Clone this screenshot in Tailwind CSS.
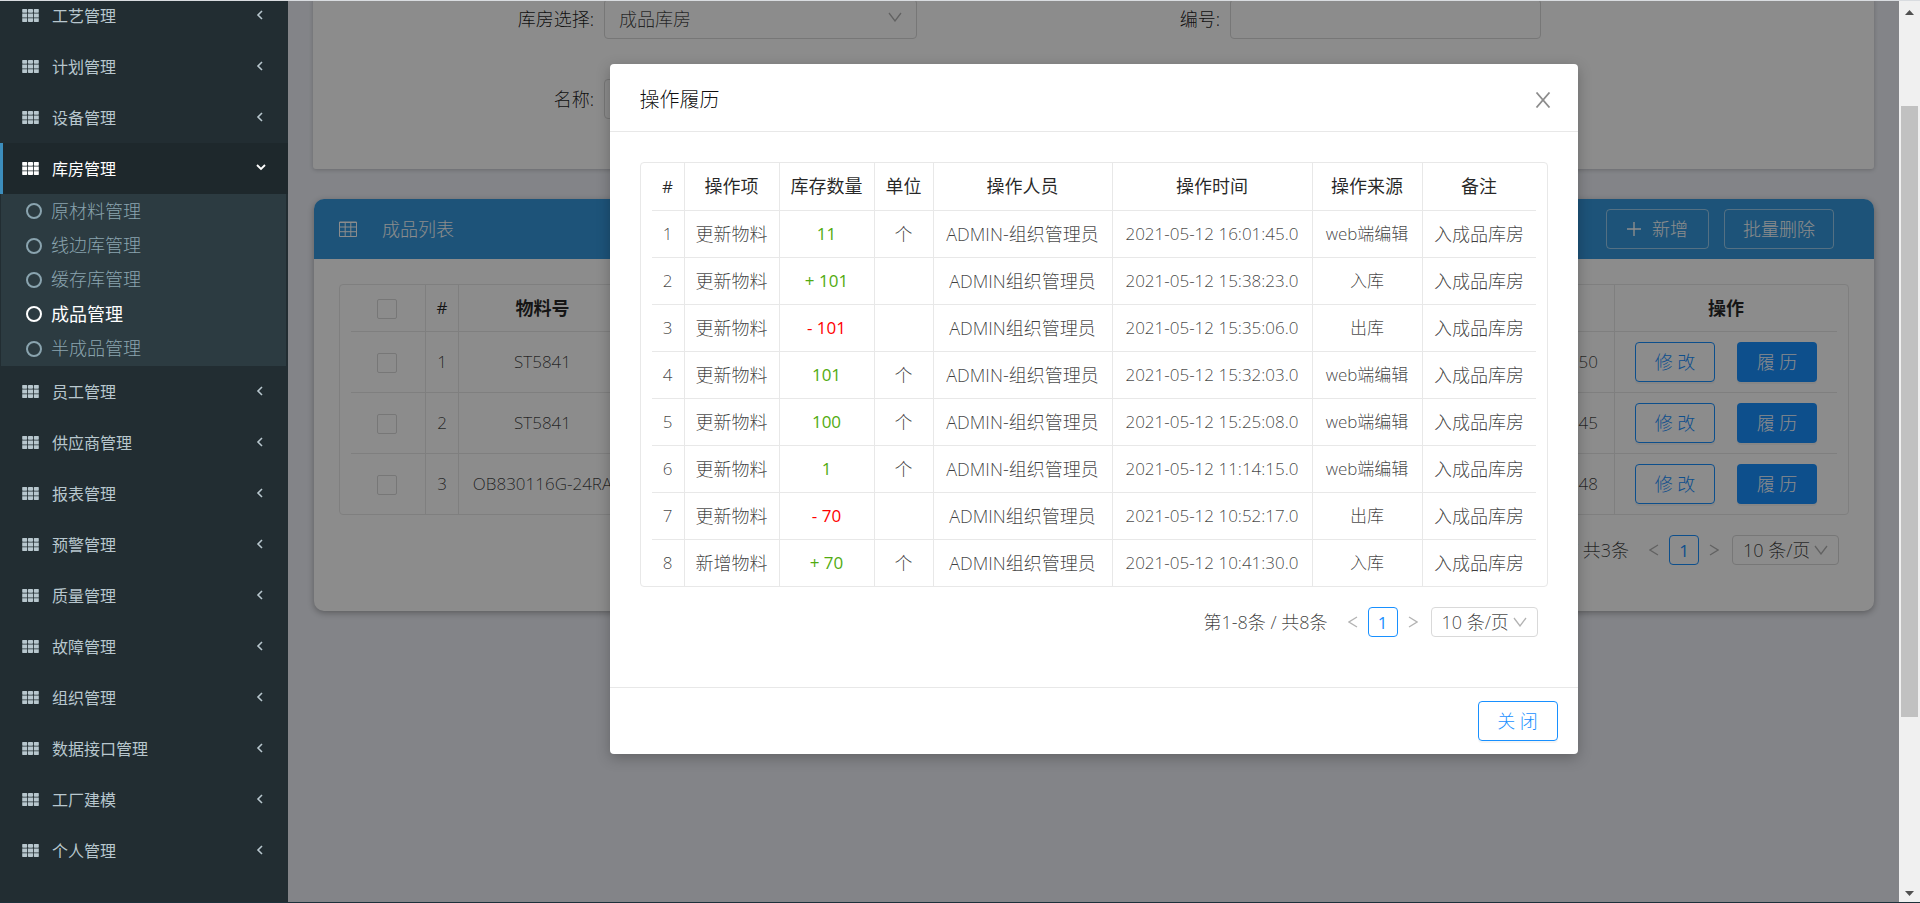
<!DOCTYPE html>
<html lang="zh-CN">
<head>
<meta charset="utf-8">
<title>成品管理</title>
<script src="https://cdn.jsdelivr.net/npm/@tailwindcss/browser@4"></script>
</head>
<body class="h-screen overflow-hidden bg-[#eef0f7] font-['Open_Sans','Noto_Sans_CJK_SC',sans-serif] text-[18px] font-light text-black/75">
<svg class="hidden">
  <symbol id="grid9" viewBox="0 0 17 13"><path fill="currentColor" d="M1 0h3.500a.7.7 0 0 1 .7.700v2.400a.7.700 0 0 1-.7.700H1a.7.700 0 0 1-.8-.7V.7A.7.700 0 0 1 1 0zM6.700 0h3.600a.7.700 0 0 1 .7.700v2.400a.7.700 0 0 1-.7.700H6.700a.7.700 0 0 1-.7-.7V.7a.7.700 0 0 1 .7-.7zM12.500 0H16a.7.700 0 0 1 .8.700v2.400a.7.700 0 0 1-.8.700h-3.500a.7.700 0 0 1-.7-.7V.7a.7.700 0 0 1 .7-.7zM.2 4.600h5v3.800h-5zM6 4.600h5v3.800H6zM11.800 4.600h5v3.800h-5zM.2 9.200h5V12.300a.7.700 0 0 1-.7.700H1a.7.700 0 0 1-.8-.7zM6 9.200h5v3.100a.7.700 0 0 1-.7.700H6.700a.7.700 0 0 1-.7-.7zM11.800 9.200h5v3.100a.7.700 0 0 1-.8.700h-3.500a.7.700 0 0 1-.7-.7z"/></symbol>
  <symbol id="left" viewBox="0 0 8 10"><path d="M6 1 2 5l4 4" fill="none" stroke="currentColor" stroke-width="1.600"/></symbol>
  <symbol id="down" viewBox="0 0 10 8"><path d="m1 2 4 4 4-4" fill="none" stroke="currentColor" stroke-width="1.800"/></symbol>
  <symbol id="caret" viewBox="0 0 14 10"><path d="m1 1 6 8 6-8" fill="none" stroke="currentColor" stroke-width="1.300"/></symbol>
  <symbol id="prev" viewBox="0 0 10 12"><path d="M9 1 1 6l8 5" fill="none" stroke="currentColor" stroke-width="1.300"/></symbol>
  <symbol id="next" viewBox="0 0 10 12"><path d="m1 1 8 5-8 5" fill="none" stroke="currentColor" stroke-width="1.300"/></symbol>
</svg>

<div class="flex h-full border-t border-[#d9dce0]">
  <nav class="w-[288px] shrink-0 overflow-hidden bg-[#222d32] text-[16px] text-[#b8c7ce]">
    <ul id="menu" class="-mt-[11px]"></ul>
  </nav>

  <main class="relative min-w-0 flex-1 overflow-hidden">
    <section class="mx-[25px] h-[170px] rounded-b-[3px] bg-white shadow-[0_1px_4px_rgba(0,0,0,0.2)]">
      <form class="-mt-[2px] grid grid-cols-[291fr_313fr_313fr_311fr_333fr] gap-y-[40px] text-black/90">
        <label for="store" class="flex h-[40px] items-center justify-end pr-[10px]">库房选择:</label>
        <div class="relative">
          <select id="store" class="h-[40px] w-full appearance-none rounded-[4px] border border-[#d9d9d9] bg-white px-[14px] text-black/75"><option>成品库房</option></select>
          <svg class="pointer-events-none absolute top-[13px] right-[15px] h-[10px] w-[14px] text-black/30"><use href="#caret"/></svg>
        </div>
        <label for="code" class="flex h-[40px] items-center justify-end pr-[10px]">编号:</label>
        <input id="code" type="text" class="h-[40px] w-full rounded-[4px] border border-[#d9d9d9] px-3">
        <span></span>
        <label for="name" class="flex h-[40px] items-center justify-end pr-[10px]">名称:</label>
        <input id="name" type="text" class="h-[40px] w-full rounded-[4px] border border-[#d9d9d9] px-3">
      </form>
    </section>

    <section class="mt-[30px] mr-[25px] ml-[26px] h-[412px] overflow-hidden rounded-[10px] bg-white shadow-[0_2px_6px_rgba(0,0,0,0.3)]">
      <header class="flex h-[60px] items-center bg-[#3598dc] pr-[40px] pl-[25px] text-white">
        <svg class="h-[16px] w-[18px]" viewBox="0 0 18 16" fill="none" stroke="currentColor"><path d="M.5 1h17v14.500H.5zM0 1.500h18M.5 6h17M.5 10.700h17M6.200 1v14.500M11.800 1v14.500"/></svg>
        <h2 class="ml-[25px] flex-1">成品列表</h2>
        <button type="button" class="flex h-[40px] w-[103px] items-center justify-center gap-[11px] rounded-[4px] border border-white/50">
          <svg class="h-[14px] w-[14px]" viewBox="0 0 14 14" stroke="currentColor" stroke-width="1.400"><path d="M7 0v14M0 7h14"/></svg>新增</button>
        <button type="button" class="ml-[15px] h-[40px] w-[110px] rounded-[4px] border border-white/50">批量删除</button>
      </header>
      <div class="px-[25px] pt-[25px]">
        <div class="rounded-[4px] border border-[#e8e8e8] px-[11px]">
          <table class="w-full table-fixed border-separate border-spacing-0 text-center [&_td]:border-r [&_td]:border-b [&_td]:border-[#e8e8e8] [&_th]:border-r [&_th]:border-b [&_th]:border-[#e8e8e8] [&_tr>*:last-child]:border-r-0 [&_tbody>tr:last-child>td]:border-b-0">
            <colgroup><col class="w-[75px]"><col class="w-[33px]"><col class="w-[168px]"><col><col class="w-[200px]"><col class="w-[222px]"></colgroup>
            <thead class="font-bold text-black/85"><tr><th class="h-[47px] leading-none"><input type="checkbox" aria-label="全选" class="mr-[3px] inline-block h-[20px] w-[20px] appearance-none rounded-[2px] border border-[#d9d9d9] align-middle"></th><th class="text-[17px] font-normal">#</th><th>物料号</th><th></th><th></th><th>操作</th></tr></thead>
            <tbody id="stock"></tbody>
          </table>
        </div>
        <div class="mt-[20px] flex items-center justify-end pr-[10px]">
          <span class="mr-[20px]">第1-3条 / 共3条</span>
          <button type="button" aria-label="上一页" class="text-black/30"><svg class="h-[12px] w-[10px]"><use href="#prev"/></svg></button>
          <button type="button" class="mx-[10px] h-[30px] w-[30px] rounded-[4px] border border-[#1890ff] text-[17px] leading-none font-normal text-[#1890ff]">1</button>
          <button type="button" aria-label="下一页" class="text-black/30"><svg class="h-[12px] w-[10px]"><use href="#next"/></svg></button>
          <div class="relative ml-[13px]">
            <select aria-label="每页条数" class="block h-[30px] w-[107px] appearance-none rounded-[4px] border border-[#d9d9d9] bg-white pl-[10px] text-[18px]"><option>10 条/页</option></select>
            <svg class="pointer-events-none absolute top-[10px] right-[11px] h-[10px] w-[14px] text-black/30"><use href="#caret"/></svg>
          </div>
        </div>
      </div>
    </section>

    <div class="absolute inset-0 flex items-start justify-center bg-black/45 pt-[63px]">
      <div role="dialog" aria-labelledby="dlg" class="w-[968px] rounded-[4px] bg-white shadow-[0_4px_14px_rgba(0,0,0,0.25)]">
        <header class="flex h-[68px] items-center justify-between border-b border-[#e8e8e8] pt-[4px] pr-[27px] pl-[30px]">
          <h1 id="dlg" class="text-[20px] text-black/95">操作履历</h1>
          <button type="button" aria-label="关闭" class="text-black/45"><svg class="h-[16px] w-[16px]" viewBox="0 0 16 16" stroke="currentColor" stroke-width="1.800"><path d="m1.500.5 13 15M14.500.5l-13 15"/></svg></button>
        </header>
        <div class="px-[30px] pt-[30px] pb-[50px]">
          <div class="rounded-[4px] border border-[#e8e8e8] px-[11px]">
            <table class="w-full table-fixed border-separate border-spacing-0 text-center whitespace-nowrap [&_td]:border-r [&_td]:border-b [&_td]:border-[#e8e8e8] [&_th]:border-r [&_th]:border-b [&_th]:border-[#e8e8e8] [&_tr>*:last-child]:border-r-0 [&_tbody>tr:last-child>td]:border-b-0">
              <colgroup><col class="w-[33px]"><col class="w-[95px]"><col class="w-[95px]"><col class="w-[59px]"><col class="w-[179px]"><col class="w-[200px]"><col class="w-[110px]"><col></colgroup>
              <thead class="text-black/85"><tr><th class="h-[48px] text-[17px] font-normal">#</th><th class="font-normal">操作项</th><th class="font-normal">库存数量</th><th class="font-normal">单位</th><th class="font-normal">操作人员</th><th class="font-normal">操作时间</th><th class="font-normal">操作来源</th><th class="font-normal">备注</th></tr></thead>
              <tbody id="history"></tbody>
            </table>
          </div>
          <div class="mt-[20px] flex items-center justify-end pr-[10px]">
            <span class="mr-[20px]">第1-8条 / 共8条</span>
            <button type="button" aria-label="上一页" class="text-black/30"><svg class="h-[12px] w-[10px]"><use href="#prev"/></svg></button>
            <button type="button" class="mx-[10px] h-[30px] w-[30px] rounded-[4px] border border-[#1890ff] text-[17px] leading-none font-normal text-[#1890ff]">1</button>
            <button type="button" aria-label="下一页" class="text-black/30"><svg class="h-[12px] w-[10px]"><use href="#next"/></svg></button>
            <div class="relative ml-[13px]">
              <select aria-label="每页条数" class="block h-[30px] w-[107px] appearance-none rounded-[4px] border border-[#d9d9d9] bg-white pl-[10px] text-[18px]"><option>10 条/页</option></select>
              <svg class="pointer-events-none absolute top-[10px] right-[11px] h-[10px] w-[14px] text-black/30"><use href="#caret"/></svg>
            </div>
          </div>
        </div>
        <footer class="flex justify-end border-t border-[#e8e8e8] px-[20px] py-[13px]">
          <button type="button" class="h-[40px] w-[80px] rounded-[4px] border border-[#1890ff] text-[#1890ff] shadow-[0_2px_0_rgba(0,0,0,0.04)]">关 闭</button>
        </footer>
      </div>
    </div>
  </main>

  <div class="flex w-[21px] shrink-0 flex-col items-center bg-[#f0f0f0] pt-[9px] pb-[7px] text-[#505050]">
    <svg class="h-[5px] w-[9px]" viewBox="0 0 9 5"><path d="M0 5 4.500 0 9 5z" fill="currentColor"/></svg>
    <div class="mt-[91px] h-[611px] w-[17px] bg-[#c1c1c1]"></div>
    <svg class="mt-auto h-[5px] w-[9px]" viewBox="0 0 9 5"><path d="m0 0 4.500 5L9 0z" fill="currentColor"/></svg>
  </div>
</div>
<div class="fixed inset-x-0 bottom-0 h-px bg-[#1d303a]"></div>

<script>
const menu = ['工艺管理','计划管理','设备管理','库房管理','员工管理','供应商管理','报表管理','预警管理','质量管理','故障管理','组织管理','数据接口管理','工厂建模','个人管理'];
const sub = ['原材料管理','线边库管理','缓存库管理','成品管理','半成品管理'];
document.getElementById('menu').innerHTML = menu.map(m => {
  const on = m === '库房管理';
  return `<li><a href="#" class="flex h-[51px] items-center border-l-[3px] pr-[22px] pl-[19px] font-normal ${on ? 'border-[#3c8dbc] bg-[#1e282c] text-white' : 'border-transparent'}">
    <svg class="h-[13px] w-[17px]"><use href="#grid9"/></svg><span class="ml-[13px] flex-1">${m}</span>
    ${on ? '<svg class="mb-[4px] h-[8px] w-[10px]"><use href="#down"/></svg>' : '<svg class="mr-[2px] mb-px h-[10px] w-[8px]"><use href="#left"/></svg>'}</a>
    ${on ? `<ul class="mr-[2px] ml-px grid h-[172px] grid-rows-5 bg-[#2c3b41] text-[18px] text-[#8aa4af]">${sub.map(s => `<li class="flex"><a href="#" class="flex flex-1 items-center pl-[25px] ${s === '成品管理' ? 'font-normal text-white' : ''}"><span class="mr-[9px] h-[16px] w-[16px] rounded-full border-[2px] border-current"></span>${s}</a></li>`).join('')}</ul>` : ''}</li>`;
}).join('');

document.getElementById('stock').innerHTML = [['1','ST5841','16:01:50'],['2','ST5841','15:38:45'],['3','OB830116G-24RA','15:32:48']].map((r, i) =>
  `<tr><td class="${i === 2 ? 'h-[60px]' : 'h-[61px]'} leading-none"><input type="checkbox" aria-label="选择第${r[0]}行" class="mr-[3px] inline-block h-[20px] w-[20px] appearance-none rounded-[2px] border border-[#d9d9d9] align-middle"></td><td class="text-[17px]">${r[0]}</td><td class="text-[17px] whitespace-nowrap">${r[1]}</td><td></td><td class="pr-[16px] text-right text-[17px]">${r[2]}</td>
  <td><div class="flex justify-center gap-[22px]"><button type="button" class="h-[40px] w-[80px] rounded-[4px] border border-[#1890ff] text-[#1890ff] shadow-[0_2px_0_rgba(0,0,0,0.04)]">修 改</button><button type="button" class="h-[40px] w-[80px] rounded-[4px] bg-[#1890ff] text-white shadow-[0_2px_0_rgba(0,0,0,0.04)]">履 历</button></div></td></tr>`).join('');

document.getElementById('history').innerHTML = [
  ['更新物料','11','个','ADMIN-组织管理员','16:01:45.0','web端编辑'],
  ['更新物料','+ 101','','ADMIN组织管理员','15:38:23.0','入库'],
  ['更新物料','- 101','','ADMIN组织管理员','15:35:06.0','出库'],
  ['更新物料','101','个','ADMIN-组织管理员','15:32:03.0','web端编辑'],
  ['更新物料','100','个','ADMIN-组织管理员','15:25:08.0','web端编辑'],
  ['更新物料','1','个','ADMIN-组织管理员','11:14:15.0','web端编辑'],
  ['更新物料','- 70','','ADMIN组织管理员','10:52:17.0','出库'],
  ['新增物料','+ 70','个','ADMIN组织管理员','10:41:30.0','入库']
].map((r, i) => `<tr><td class="${i === 7 ? 'h-[46px]' : 'h-[47px]'} text-[17px]">${i + 1}</td><td>${r[0]}</td><td class="text-[17px] font-normal ${r[1][0] === '-' ? 'text-[#ff0000]' : 'text-[#52ab10]'}">${r[1]}</td><td>${r[2]}</td><td>${r[3]}</td><td class="text-[17px]">2021-05-12 ${r[4]}</td><td class="text-[17px]">${r[5]}</td><td>入成品库房</td></tr>`).join('');
</script>
</body>
</html>
